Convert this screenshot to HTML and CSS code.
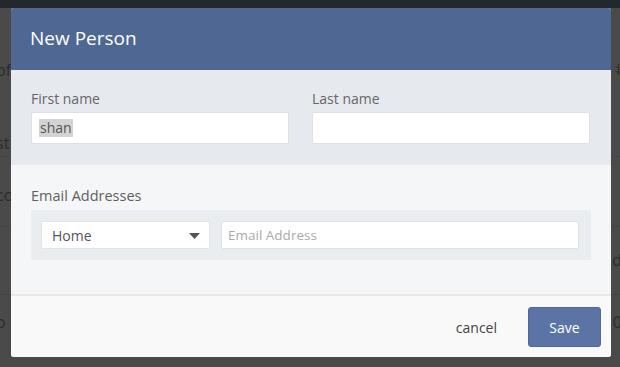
FILE: index.html
```html
<!DOCTYPE html>
<html>
<head>
<meta charset="utf-8">
<link rel="stylesheet" href="styles.css">
</head>
<body>
<div class="page">
  <div class="topbar"></div>
  <div class="row row-a"><span class="lt">of</span><span class="rt">‡</span></div>
  <div class="row row-b"><span class="lt">st</span></div>
  <div class="row row-c"><span class="lt">co</span></div>
  <div class="row row-d"><span class="lt"></span><span class="rt">d</span></div>
  <div class="row row-e"><span class="lt">o</span><span class="rt">0</span></div>
</div>

<div class="modal">
  <div class="modal-header">New Person</div>
  <div class="names">
    <div class="field first">
      <label class="label">First name</label>
      <div class="input"><span class="sel">shan</span></div>
    </div>
    <div class="field last">
      <label class="label">Last name</label>
      <div class="input"></div>
    </div>
  </div>
  <div class="emails">
    <div class="label">Email Addresses</div>
    <div class="email-box">
      <div class="select">Home
        <svg class="caret" width="11" height="6" viewBox="0 0 11 6"><path d="M0 0H11L5.5 6Z" fill="#555"/></svg>
      </div>
      <div class="input email"><span class="ph">Email Address</span></div>
    </div>
  </div>
  <div class="footer">
    <span class="cancel">cancel</span>
    <button class="save">Save</button>
  </div>
</div>
</body>
</html>
```

FILE: styles.css
```css
html, body {
  margin: 0;
  padding: 0;
}
body {
  width: 620px;
  height: 367px;
  overflow: hidden;
  background: #4a4a4a;
  font-family: "Open Sans", "Noto Sans", sans-serif;
  position: relative;
}
.page {
  display: flex;
  flex-direction: column;
  height: 367px;
  overflow: hidden;
}
.topbar {
  height: 8px;
  flex: none;
  background: #23272e;
}
.row {
  flex: none;
  display: flex;
  justify-content: space-between;
  align-items: flex-start;
  color: #2b2b2b;
  font-size: 16px;
  line-height: 20px;
  border-bottom: 1px solid #444;
  box-sizing: border-box;
}
.lt { margin-left: -4px; }
.rt { margin-right: -2px; }
.row-a { height: 104px; padding-top: 52px; border-bottom: none; }
.row-a .rt { font-size: 14px; }
.row-b { height: 45px; padding-top: 21px; }
.row-c { height: 70px; padding-top: 28px; }
.row-d { height: 68px; padding-top: 23px; }
.row-e { height: 72px; padding-top: 17px; border-bottom: none; }

.modal {
  position: absolute;
  left: 11px;
  top: 8px;
  width: 600px;
  height: 349px;
  border-radius: 3px;
  overflow: hidden;
  background: #f9f9f9;
  display: flex;
  flex-direction: column;
}
.modal-header {
  height: 62px;
  background: #4e6793;
  color: #fff;
  font-size: 19px;
  display: flex;
  align-items: center;
  padding-left: 19px;
  padding-bottom: 2px;
  box-sizing: border-box;
}
.names {
  background: #e6e9ee;
  height: 95px;
  box-sizing: border-box;
  padding: 19px 21px 0 20px;
  display: grid;
  grid-template-columns: 258px 278px;
  column-gap: 23px;
}
.label {
  display: block;
  font-size: 14px;
  color: #666;
  height: 23px;
  line-height: 20px;
}
.input {
  height: 32px;
  background: #fff;
  border: 1px solid #dde1e7;
  border-radius: 2px;
  box-sizing: border-box;
  display: flex;
  align-items: center;
  padding-left: 7px;
  font-size: 14px;
  color: #555;
}
.sel {
  background: #d3d3d3;
  padding: 0 1px;
  line-height: 18px;
}
.emails {
  background: #f5f6f8;
  height: 131px;
  box-sizing: border-box;
  padding: 21px 20px 0 20px;
  border-bottom: 2px solid #e8e9eb;
}
.emails .label {
  font-size: 14.5px;
  height: 24px;
  color: #5e5e5e;
}
.email-box {
  background: #eaedf0;
  border-radius: 2px;
  height: 50px;
  box-sizing: border-box;
  padding: 11px 12px 0 10px;
  display: flex;
  gap: 11px;
}
.select {
  width: 169px;
  height: 28px;
  background: #fff;
  border: 1px solid #e1e4e8;
  border-radius: 2px;
  box-sizing: border-box;
  display: flex;
  align-items: center;
  justify-content: space-between;
  padding: 0 9px 0 10px;
  font-size: 14px;
  color: #555;
}
.caret { margin-top: 1px; }
.input.email {
  flex: 1;
  height: 28px;
  padding-left: 6px;
}
.ph { color: #aaa; font-size: 13.5px; }
.footer {
  flex: 1;
  background: #f9f9f9;
  display: flex;
  align-items: center;
  justify-content: flex-end;
  padding-right: 10px;
  padding-top: 1px;
}
.cancel {
  font-size: 14px;
  color: #444;
  margin-right: 31px;
}
.save {
  width: 73px;
  height: 40px;
  background: #5b74a5;
  border: 1px solid #4f6896;
  border-radius: 3px;
  color: #fff;
  font-family: "Open Sans", "Noto Sans", sans-serif;
  font-size: 14px;
  padding: 0;
}
```
